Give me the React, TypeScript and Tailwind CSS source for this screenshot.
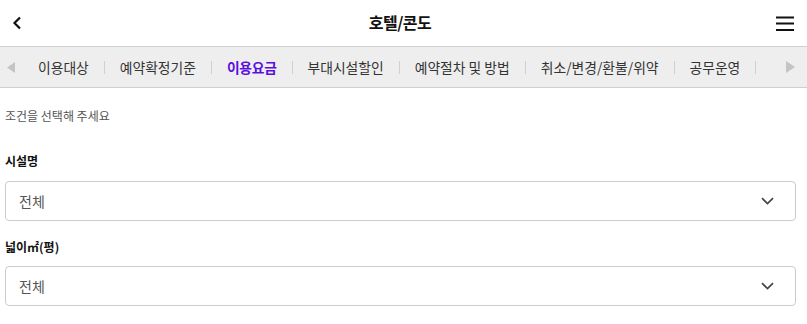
import React from "react";

const tabs = [
  "이용대상",
  "예약확정기준",
  "이용요금",
  "부대시설할인",
  "예약절차 및 방법",
  "취소/변경/환불/위약",
  "공무운영",
];

const font = { fontFamily: '"Noto Sans CJK KR", "Noto Sans", sans-serif' };

function Select({ value }: { value: string }) {
  return (
    <div className="ml-[5px] mr-[11px] h-[40px] flex items-center justify-between border border-[#cccccc] rounded-[4px] bg-white pl-[13px] pr-[21px]">
      <span className="text-[14px] text-[#555555]">{value}</span>
      <svg width="13" height="8" viewBox="0 0 13 8" fill="none">
        <path d="M1 1.2L6.5 6.5L12 1.2" stroke="#444444" strokeWidth="1.7" />
      </svg>
    </div>
  );
}

export default function App() {
  return (
    <div className="w-[807px] h-[324px] bg-white overflow-hidden" style={font}>
      {/* Header */}
      <div className="h-[47px] flex items-center justify-between border-b border-[#cfcfcf] px-[12px]">
        <svg width="12" height="14" viewBox="0 0 12 14" fill="none">
          <path d="M8 1.5L2.5 7L8 12.5" stroke="#111111" strokeWidth="2.2" />
        </svg>
        <h1 className="text-[16px] font-bold text-[#111111] tracking-[-0.5px] -mt-[2px]">호텔/콘도</h1>
        <svg width="18" height="15" viewBox="0 0 18 15" className="mr-[1px]">
          <rect x="0" y="0.5" width="18" height="2" fill="#111111" />
          <rect x="0" y="6.5" width="18" height="2" fill="#111111" />
          <rect x="0" y="13" width="18" height="2" fill="#111111" />
        </svg>
      </div>

      {/* Tabs */}
      <div className="h-[41px] flex items-center bg-[#eeeeee] border-b border-[#cfcfcf]">
        <div className="w-[38px] flex items-center pl-[7px]">
          <svg width="8" height="11" viewBox="0 0 8 11">
            <path d="M8 0L0 5.5L8 11Z" fill="#c4c4c4" />
          </svg>
        </div>
        {tabs.map((t) => (
          <React.Fragment key={t}>
            <span
              className={
                t === "이용요금"
                  ? "text-[13.8px] font-bold text-[#5a0fe0] whitespace-nowrap tracking-[-0.3px]"
                  : "text-[13.8px] text-[#333333] whitespace-nowrap"
              }
            >
              {t}
            </span>
            <span className="mx-[15px] w-px h-[13px] bg-[#d0d0d0]" />
          </React.Fragment>
        ))}
        <div className="ml-auto pr-[12px] flex items-center">
          <svg width="9" height="12" viewBox="0 0 9 12">
            <path d="M0 0L9 6L0 12Z" fill="#c4c4c4" />
          </svg>
        </div>
      </div>

      {/* Content */}
      <div className="flex flex-col">
        <p className="mt-[20px] ml-[5px] text-[12px] text-[#555555] leading-[16px]">조건을 선택해 주세요</p>
        <p className="mt-[29px] ml-[5px] text-[12px] font-bold text-[#111111] leading-[16px]">시설명</p>
        <div className="mt-[12px]">
          <Select value="전체" />
        </div>
        <p className="mt-[18px] ml-[5px] text-[12px] font-bold text-[#111111] leading-[16px]">넓이㎡(평)</p>
        <div className="mt-[11px]">
          <Select value="전체" />
        </div>
      </div>
    </div>
  );
}
